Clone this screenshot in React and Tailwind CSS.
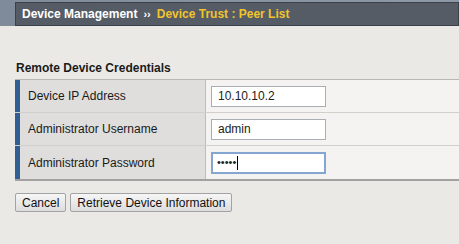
import React from 'react'

const rows = [
    { label: 'Device IP Address', value: '10.10.10.2', type: 'text' },
    { label: 'Administrator Username', value: 'admin', type: 'text' },
    { label: 'Administrator Password', value: '•••••', type: 'password' },
]

function Row({ label, value, type, last }) {
    return (
        <div className={`flex h-[33px] ${last ? '' : 'border-b border-[#d0cfcc]'}`}>
            <div className="w-[5px] bg-[#2f5f93]" />
            <div className="w-[186px] bg-[#dfdedc] border-r border-[#bdbcba] flex items-center pl-[8px] text-[12px] text-[#1a1a1a]">
                {label}
            </div>
            <div className="flex-1 bg-[#f4f3f1] flex items-center pl-[5px]">
                {type === 'password' ? (
                    <div className="w-[115px] h-[22px] bg-white border-2 border-[#86a6d2] flex items-center pl-[4px] text-[11px] text-[#222]">
                        <span className="leading-none">{value}</span>
                        <span className="ml-px w-px h-[14px] bg-black" />
                    </div>
                ) : (
                    <div className="w-[115px] h-[21px] bg-white border border-[#a9aeb4] flex items-center pl-[6px] text-[12px] text-[#222]">
                        {value}
                    </div>
                )}
            </div>
        </div>
    )
}

export default function App() {
    return (
        <div className="w-[459px] h-[244px] bg-[#ebe9e6] font-['Liberation_Sans',Arial,sans-serif] overflow-hidden">
            <div className="flex h-[26px] bg-gradient-to-r from-[#7f8b9b] to-[#8e99a8]">
                <div className="w-[15px]" />
                <div className="flex-1 mt-[2px] bg-[#565c66] border border-[#3c4149] flex items-center pl-[6px] text-[12px] font-bold">
                    <span className="text-white">Device Management</span>
                    <span className="text-white mx-[6px] text-[11px]">››</span>
                    <span className="text-[#f0c42c]">Device Trust : Peer List</span>
                </div>
            </div>
            <div className="h-[35px] bg-[#ebe9e6]" />
            <div className="pl-[16px] text-[12px] font-bold text-[#1a1a1a] h-[18px] leading-[14px]">Remote Device Credentials</div>
            <div className="ml-[15px] border-t border-[#b9b8b6] border-b-2 border-b-[#a3a2a0]">
                {rows.map((r, i) => (
                    <Row key={r.label} {...r} last={i === rows.length - 1} />
                ))}
            </div>
            <div className="flex gap-[4px] pl-[15px] mt-[12px]">
                <button className="h-[19px] px-[6px] text-[12px] text-[#111] bg-gradient-to-b from-[#f6f6f6] to-[#dddddd] border border-[#a3a3a3] rounded-[2px]">Cancel</button>
                <button className="h-[19px] px-[6px] text-[12px] text-[#111] bg-gradient-to-b from-[#f6f6f6] to-[#dddddd] border border-[#a3a3a3] rounded-[2px]">Retrieve Device Information</button>
            </div>
        </div>
    )
}
